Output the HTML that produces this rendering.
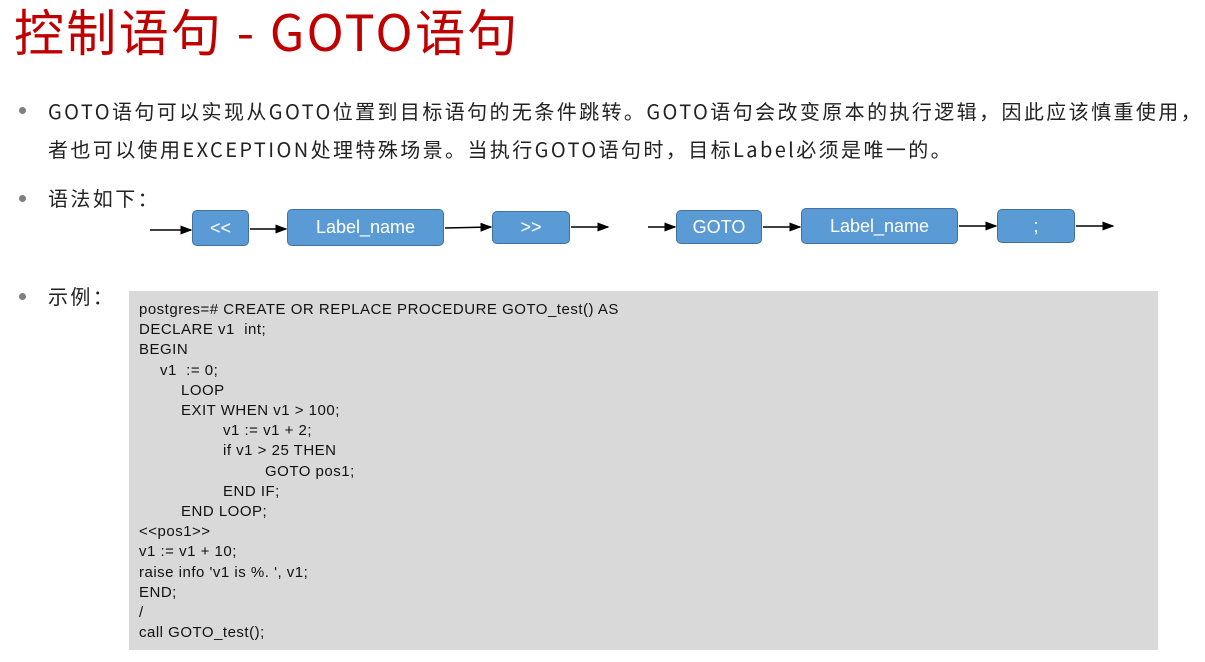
<!DOCTYPE html>
<html><head><meta charset="utf-8"><style>
*{margin:0;padding:0;box-sizing:border-box}
body{width:1205px;height:662px;background:#fff;position:relative;overflow:hidden;font-family:"Liberation Sans","Noto Sans CJK SC",sans-serif;color:#222}
.a{position:absolute;white-space:nowrap}
.t{left:14px;top:-6px;font-size:50px;letter-spacing:2.3px;color:#c00000;font-family:"Noto Sans CJK SC","Liberation Sans",sans-serif;font-weight:400}
.b{font-size:20px;line-height:24px;letter-spacing:2.4px;font-family:"Noto Sans CJK SC","Liberation Sans",sans-serif}
.dot{position:absolute;width:7px;height:7px;border-radius:50%;background:#7f7f7f;left:19px}
.box{position:absolute;background:#5b9bd5;border:1px solid #41719c;border-radius:5px;color:#fff;font-size:18px;display:flex;align-items:center;justify-content:center}
.code{position:absolute;left:129px;top:291px;width:1029px;height:359px;background:#d9d9d9}
.code .in{position:absolute;left:10px;top:9px;font-family:"Liberation Sans",sans-serif;font-size:15px;line-height:20.2px;letter-spacing:0.5px;color:#111;white-space:pre}
</style></head><body>
<div class="a t">控制语句 - GOTO语句</div>
<div class="dot" style="top:107px"></div>
<div class="a b" style="left:48px;top:99px">GOTO语句可以实现从GOTO位置到目标语句的无条件跳转。GOTO语句会改变原本的执行逻辑，因此应该慎重使用，</div>
<div class="a b" style="left:48px;top:137px">者也可以使用EXCEPTION处理特殊场景。当执行GOTO语句时，目标Label必须是唯一的。</div>
<div class="dot" style="top:195px"></div>
<div class="a b" style="left:48px;top:186px">语法如下：</div>
<div class="dot" style="top:293px"></div>
<div class="a b" style="left:48px;top:284px">示例：</div>
<svg class="a" style="left:0;top:0" width="1205" height="300">
<defs><marker id="m" markerWidth="8" markerHeight="8" refX="7" refY="4" orient="auto"><path d="M0,1 L8,4 L0,7z" fill="#000"/></marker></defs>
<g stroke="#000" stroke-width="1.5" marker-end="url(#m)">
<line x1="150" y1="230" x2="191" y2="230"/>
<line x1="250" y1="229" x2="286" y2="229"/>
<line x1="445" y1="228" x2="491" y2="227"/>
<line x1="571" y1="227" x2="608" y2="227"/>
<line x1="648" y1="227" x2="675" y2="227"/>
<line x1="763" y1="227" x2="800" y2="227"/>
<line x1="959" y1="226" x2="996" y2="226"/>
<line x1="1076" y1="226" x2="1113" y2="226"/>
</g></svg>
<div class="box" style="left:192px;top:210px;width:57px;height:36px">&lt;&lt;</div>
<div class="box" style="left:287px;top:209px;width:157px;height:37px">Label_name</div>
<div class="box" style="left:492px;top:211px;width:78px;height:33px">&gt;&gt;</div>
<div class="box" style="left:676px;top:210px;width:86px;height:34px">GOTO</div>
<div class="box" style="left:801px;top:208px;width:157px;height:36px">Label_name</div>
<div class="box" style="left:997px;top:209px;width:78px;height:34px">;</div>
<div class="code"><div class="in"><div>postgres=# CREATE OR REPLACE PROCEDURE GOTO_test() AS</div><div>DECLARE v1  int;</div><div>BEGIN</div><div style="padding-left:21px">v1  := 0;</div><div style="padding-left:42px">LOOP</div><div style="padding-left:42px">EXIT WHEN v1 &gt; 100;</div><div style="padding-left:84px">v1 := v1 + 2;</div><div style="padding-left:84px">if v1 &gt; 25 THEN</div><div style="padding-left:126px">GOTO pos1;</div><div style="padding-left:84px">END IF;</div><div style="padding-left:42px">END LOOP;</div><div>&lt;&lt;pos1&gt;&gt;</div><div>v1 := v1 + 10;</div><div>raise info 'v1 is %. ', v1;</div><div>END;</div><div>/</div><div>call GOTO_test();</div></div></div>
</body></html>
